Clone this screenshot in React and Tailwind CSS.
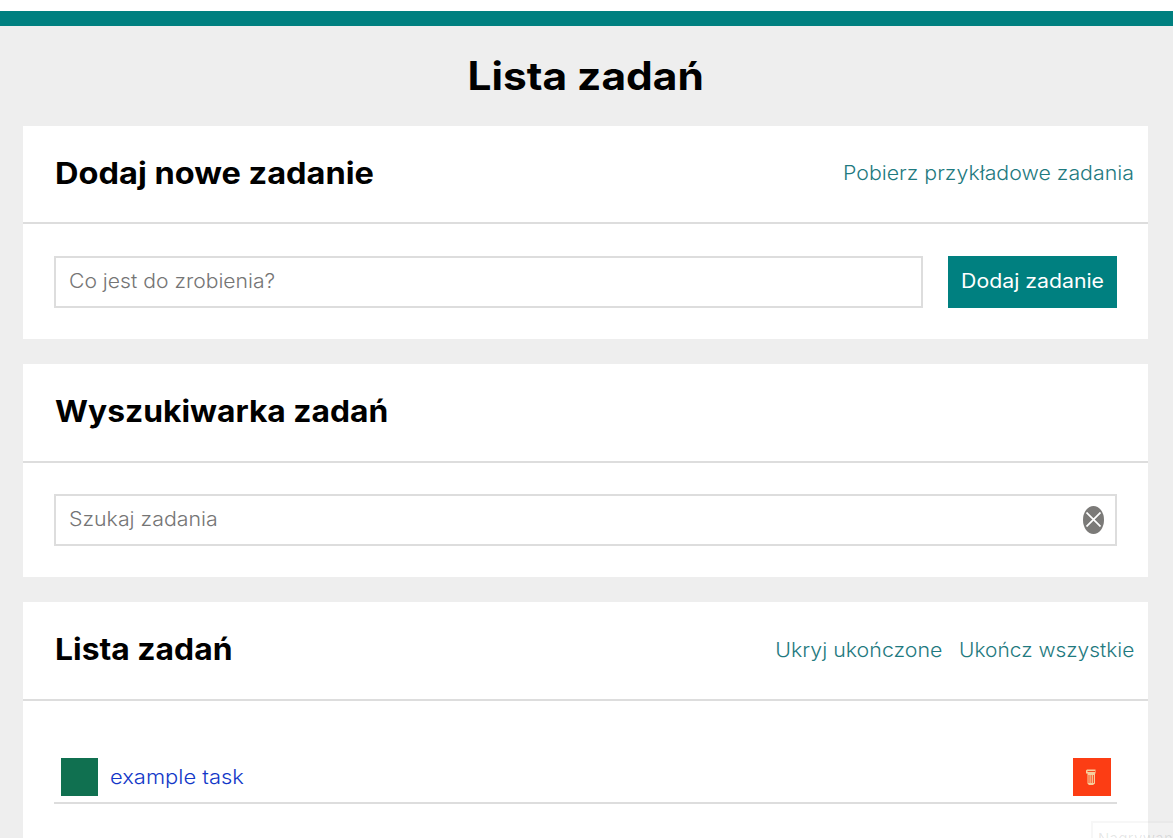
function Card({ title, actions, bodyClass, headClass, children }) {
  return (
    <section className="bg-white">
      <header className={`flex items-center justify-between border-b-2 border-[#ddd] pl-8 pr-3.5 ${headClass}`}>
        <h2 className="text-[30px] leading-9 font-bold whitespace-nowrap">{title}</h2>
        <div className="flex gap-7 pt-0.5 text-[19.5px] font-light text-[#1f7a80]">{actions}</div>
      </header>
      <div className={bodyClass}>{children}</div>
    </section>
  );
}

function TrashIcon() {
  return (
    <svg width="10" height="16" viewBox="0 0 10 16" className="mr-0.5">
      <path d="M0 1.500L1 .5h8.500v4H9v10L7 16H3l-1.500-1.500v-10H0z" fill="#f6cf9c" />
      <path d="M1.500 2.500H9M3 6v8M5.200 6v8M7.400 6v8" stroke="#fc3d14" strokeWidth="0.9" fill="none" />
    </svg>
  );
}

export default function App() {
  return (
    <div className="relative h-[838px] overflow-hidden bg-[#eee] font-['Inter',sans-serif] text-black">
      <div className="h-[11px] bg-white" />
      <div className="h-[15px] bg-[#008080]" />
      <main className="flex flex-col gap-[25px] pl-[23px] pr-[25px]">
        <h1 className="-mb-[25px] flex h-[100px] items-center justify-center text-[39px] font-bold">
          <span className="inline-block scale-x-[1.088]">Lista zadań</span>
        </h1>

        <Card
          title={<span className="inline-block origin-left scale-x-[1.085]">Dodaj nowe zadanie</span>}
          headClass="h-[98px] pb-0.5"
          bodyClass="flex h-[115px] gap-[25px] pl-[31px] pr-[31px] pt-8"
          actions={<button className="origin-right scale-x-[1.094]">Pobierz przykładowe zadania</button>}
        >
          <div className="flex h-[52px] flex-1 items-center border-2 border-[#ddd] pl-[13px] text-[19.5px] font-light text-[#757575]">
            <span className="origin-left scale-x-[1.084]">Co jest do zrobienia?</span>
          </div>
          <button className="flex h-[52px] w-[169px] items-center justify-center bg-[#008080] text-[19.5px] whitespace-nowrap text-white">
            <span className="scale-x-[1.09]">Dodaj zadanie</span>
          </button>
        </Card>

        <Card
          title={<span className="inline-block origin-left scale-x-[1.06]">Wyszukiwarka zadań</span>}
          headClass="h-[99px] pb-[3px]"
          bodyClass="h-[114px] px-[31px] pt-[31px]"
        >
          <div className="flex h-[52px] items-center justify-between border-2 border-[#ddd] pl-[13px] pr-[11px] text-[19.5px] font-light text-[#757575]">
            <span className="origin-left scale-x-[1.094]">Szukaj zadania</span>
            <button className="flex h-7 w-[21px] items-center justify-center rounded-[50%] bg-[#7b7a78]">
              <svg width="15" height="15" viewBox="0 0 15 15" className="mb-0.5" stroke="#fff" strokeWidth="1.7">
                <path d="M.5 .5l14 14M14.500 .5l-14 14" />
              </svg>
            </button>
          </div>
        </Card>

        <Card
          title={<span className="inline-block origin-left scale-x-[1.062]">Lista zadań</span>}
          headClass="h-[99px] pb-[3px]"
          bodyClass="h-[200px] px-[31px] pt-[51px]"
          actions={
            <>
              <button className="origin-right pt-0.5 scale-x-[1.097]">Ukryj ukończone</button>
              <button className="origin-right pt-0.5 scale-x-[1.073]">Ukończ wszystkie</button>
            </>
          }
        >
          <div className="flex h-[52px] items-center border-b-2 border-[#ddd] pl-[7px] pr-1.5">
            <button className="h-[38px] w-[37px] bg-[#107050]" />
            <span className="ml-3 flex-1 pt-0.5 text-[19.5px] font-light text-[#1338c8]">
              <span className="inline-block origin-left scale-x-[1.125]">example task</span>
            </span>
            <button className="flex size-[38px] items-center justify-center bg-[#fc3d14]">
              <TrashIcon />
            </button>
          </div>
        </Card>
      </main>
      <div className="absolute top-[821px] left-[1091px] h-10 w-[120px] border-2 border-black/[0.03] bg-white/20 pt-[5px] pl-[5px] text-[15px] tracking-[0.3px] text-black/10">
        Nagrywanie
      </div>
    </div>
  );
}
